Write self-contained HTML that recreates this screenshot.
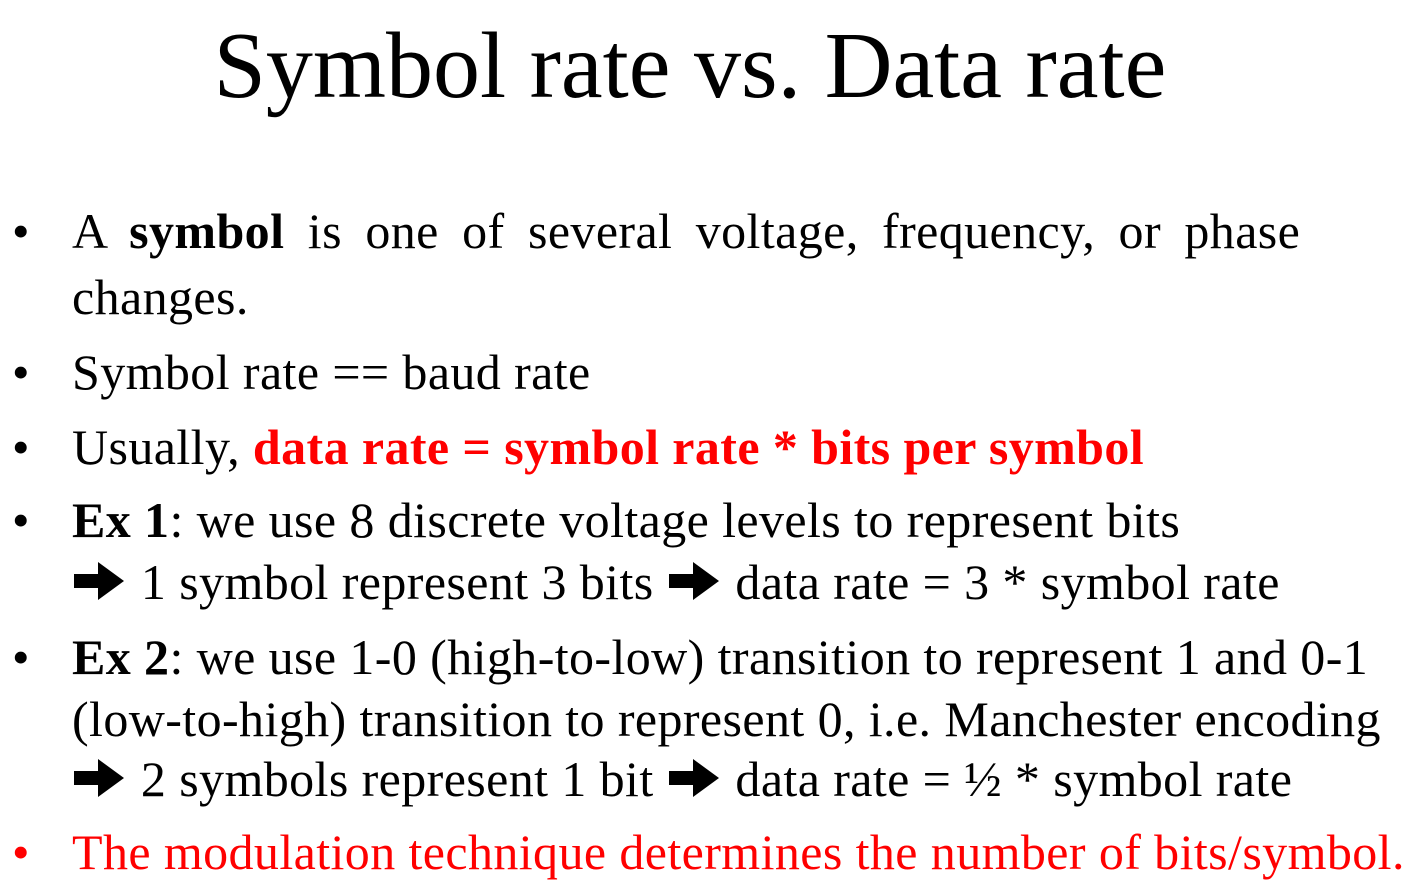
<!DOCTYPE html>
<html><head><meta charset="utf-8"><style>
body{margin:0;width:1412px;height:885px;background:#fff;overflow:hidden;position:relative;font-family:"Liberation Serif",serif;color:#000}
.t{position:absolute;left:0;width:1380px;text-align:center;top:19px;font-size:94px;line-height:94px;white-space:nowrap}
.l{position:absolute;font-size:50px;line-height:50px;white-space:nowrap;letter-spacing:0.4px}
.b{position:absolute;left:12px;font-size:50px;line-height:50px}
.r{color:#f00}
svg{display:inline-block;vertical-align:-2px}
</style></head><body>
<div class="t">Symbol rate vs. Data rate</div>

<div class="b" style="top:206px">•</div>
<div class="l" style="left:72px;top:206px;word-spacing:10.5px">A <b>symbol</b> is one of several voltage, frequency, or phase</div>
<div class="l" style="left:72px;top:272px">changes.</div>

<div class="b" style="top:347px">•</div>
<div class="l" style="left:72px;top:347px">Symbol rate == baud rate</div>

<div class="b" style="top:422px">•</div>
<div class="l" style="left:72px;top:422px">Usually, <b class="r">data rate = symbol rate * bits per symbol</b></div>

<div class="b" style="top:495px">•</div>
<div class="l" style="left:72px;top:495px"><b>Ex 1</b>: we use 8 discrete voltage levels to represent bits</div>
<div class="l" style="left:72px;top:557px"><svg width="56" height="40" viewBox="0 0 56 40"><path d="M2 13h24V1l26 19-26 19V27H2z" fill="#000"/></svg> 1 symbol represent 3 bits <svg width="56" height="40" viewBox="0 0 56 40"><path d="M2 13h24V1l26 19-26 19V27H2z" fill="#000"/></svg> data rate = 3 * symbol rate</div>

<div class="b" style="top:632px">•</div>
<div class="l" style="left:72px;top:632px"><b>Ex 2</b>: we use 1-0 (high-to-low) transition to represent 1 and 0-1</div>
<div class="l" style="left:72px;top:694px">(low-to-high) transition to represent 0, i.e. Manchester encoding</div>
<div class="l" style="left:72px;top:754px"><svg width="56" height="40" viewBox="0 0 56 40"><path d="M2 13h24V1l26 19-26 19V27H2z" fill="#000"/></svg> 2 symbols represent 1 bit <svg width="56" height="40" viewBox="0 0 56 40"><path d="M2 13h24V1l26 19-26 19V27H2z" fill="#000"/></svg> data rate = ½ * symbol rate</div>

<div class="b r" style="top:827px">•</div>
<div class="l r" style="left:72px;top:827px">The modulation technique determines the number of bits/symbol.</div>
</body></html>
